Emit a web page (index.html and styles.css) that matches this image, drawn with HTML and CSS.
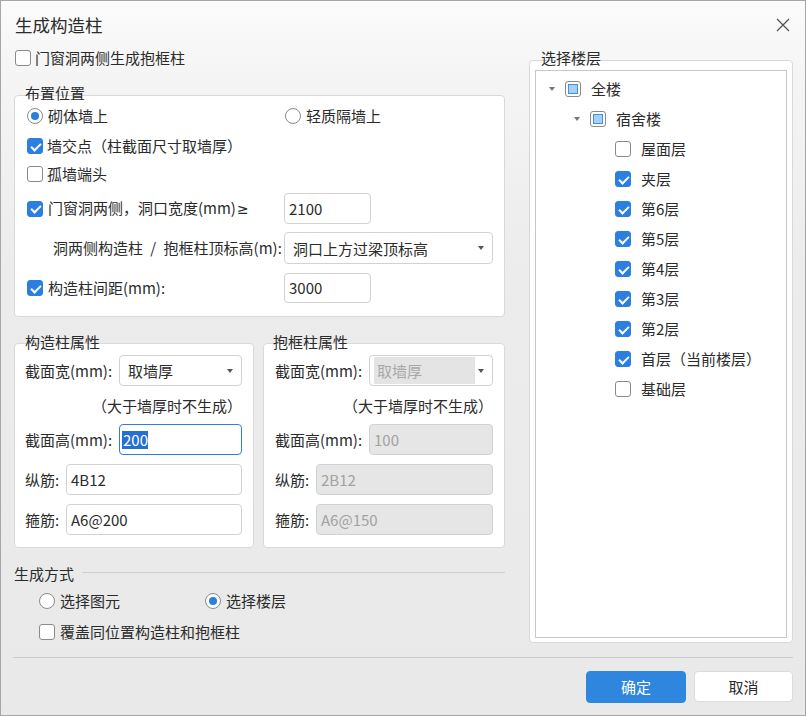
FILE: index.html
```html
<!DOCTYPE html>
<html lang="zh-CN">
<head>
<meta charset="utf-8">
<title>生成构造柱</title>
<link rel="stylesheet" href="styles.css">
</head>
<body>
<div class="window">
  <div class="titlebar">
    <span class="title">生成构造柱</span>
    <svg class="close" width="14" height="14" viewBox="0 0 14 14"><path d="M1 1L13 13M13 1L1 13" stroke="#555" stroke-width="1.3" fill="none"/></svg>
  </div>
  <div class="main">
    <div class="left">
      <div class="row top-check"><span class="cb"></span><span>门窗洞两侧生成抱框柱</span></div>

      <div class="group place">
        <div class="legend">布置位置</div>
        <div class="box place-box">
          <div class="prow r1">
            <div class="c1"><span class="rb on"></span><span>砌体墙上</span></div>
            <div class="c2"><span class="rb"></span><span>轻质隔墙上</span></div>
          </div>
          <div class="prow r2"><div class="c1"><span class="cb on"></span><span>墙交点（柱截面尺寸取墙厚）</span></div></div>
          <div class="prow r3"><div class="c1"><span class="cb"></span><span>孤墙端头</span></div></div>
          <div class="prow r4">
            <div class="c1"><span class="cb on"></span><span>门窗洞两侧，洞口宽度(mm)<span class="ge">≥</span></span></div>
            <div class="field short">2100</div>
          </div>
          <div class="prow r5">
            <div class="c1 indent">洞两侧构造柱 / 抱框柱顶标高(m):</div>
            <div class="field select wide"><span>洞口上方过梁顶标高</span><span class="caret"></span></div>
          </div>
          <div class="prow r6">
            <div class="c1"><span class="cb on"></span><span>构造柱间距(mm):</span></div>
            <div class="field short">3000</div>
          </div>
        </div>
      </div>

      <div class="props">
        <div class="group prop col">
          <div class="legend">构造柱属性</div>
          <div class="box prop-box">
            <div class="frow f1"><span>截面宽(mm):</span><div class="field select mid"><span>取墙厚</span><span class="caret"></span></div></div>
            <div class="note">（大于墙厚时不生成）</div>
            <div class="frow f2"><span>截面高(mm):</span><div class="field mid focus"><span class="sel">200</span></div></div>
            <div class="frow f3"><span>纵筋:</span><div class="field long">4B12</div></div>
            <div class="frow f3"><span>箍筋:</span><div class="field long">A6@200</div></div>
          </div>
        </div>
        <div class="group prop frame">
          <div class="legend">抱框柱属性</div>
          <div class="box prop-box">
            <div class="frow f1"><span>截面宽(mm):</span><div class="field select mid dis-select"><span class="dis-inner">取墙厚</span><span class="caret"></span></div></div>
            <div class="note">（大于墙厚时不生成）</div>
            <div class="frow f2"><span>截面高(mm):</span><div class="field mid disabled">100</div></div>
            <div class="frow f3"><span>纵筋:</span><div class="field long disabled">2B12</div></div>
            <div class="frow f3"><span>箍筋:</span><div class="field long disabled">A6@150</div></div>
          </div>
        </div>
      </div>

      <div class="mode">
        <div class="mode-head"><span>生成方式</span><span class="rule"></span></div>
        <div class="mode-radios">
          <div class="m1"><span class="rb"></span><span>选择图元</span></div>
          <div class="m2"><span class="rb on"></span><span>选择楼层</span></div>
        </div>
        <div class="mode-check"><span class="cb"></span><span>覆盖同位置构造柱和抱框柱</span></div>
      </div>
    </div>

    <div class="right">
      <div class="legend">选择楼层</div>
      <div class="box floor-box">
        <div class="tree">
          <div class="node l0"><span class="arrow"></span><span class="cb part"></span><span>全楼</span></div>
          <div class="node l1"><span class="arrow"></span><span class="cb part"></span><span>宿舍楼</span></div>
          <div class="node l2"><span class="arrow none"></span><span class="cb"></span><span>屋面层</span></div>
          <div class="node l2"><span class="arrow none"></span><span class="cb on"></span><span>夹层</span></div>
          <div class="node l2"><span class="arrow none"></span><span class="cb on"></span><span>第6层</span></div>
          <div class="node l2"><span class="arrow none"></span><span class="cb on"></span><span>第5层</span></div>
          <div class="node l2"><span class="arrow none"></span><span class="cb on"></span><span>第4层</span></div>
          <div class="node l2"><span class="arrow none"></span><span class="cb on"></span><span>第3层</span></div>
          <div class="node l2"><span class="arrow none"></span><span class="cb on"></span><span>第2层</span></div>
          <div class="node l2"><span class="arrow none"></span><span class="cb on"></span><span>首层（当前楼层）</span></div>
          <div class="node l2"><span class="arrow none"></span><span class="cb"></span><span>基础层</span></div>
        </div>
      </div>
    </div>
  </div>
  <div class="footer">
    <div class="sep"></div>
    <div class="buttons">
      <div class="btn primary">确定</div>
      <div class="btn">取消</div>
    </div>
  </div>
</div>
</body>
</html>
```

FILE: styles.css
```css
html, body {
  margin: 0;
  padding: 0;
}
body {
  font-family: "Noto Sans CJK SC", "Microsoft YaHei", sans-serif;
  font-size: 15px;
  color: #2b2b2b;
  line-height: 20px;
}
.window {
  width: 806px;
  height: 716px;
  box-sizing: border-box;
  border: 1px solid #a6a6a6;
  background: linear-gradient(180deg, #fbfbfb 0px, #f5f5f5 70px, #ebeceb 260px, #e8e9e8 716px);
  display: flex;
  flex-direction: column;
}
.titlebar {
  height: 47px;
  display: flex;
  align-items: center;
  justify-content: space-between;
  padding: 0 15px 0 14px;
}
.title {
  font-size: 17.5px;
  color: #2b2b2b;
}
.close {
  display: block;
}
.main {
  display: flex;
  gap: 24px;
  height: 609px;
  padding: 0 12px 0 13px;
}
.left {
  width: 491px;
  display: flex;
  flex-direction: column;
}
.right {
  width: 264px;
  display: flex;
  flex-direction: column;
}

/* controls */
.cb {
  position: relative;
  width: 16px;
  height: 16px;
  box-sizing: border-box;
  border: 1px solid #8a8a8a;
  border-radius: 3px;
  background: #fff;
  flex: none;
}
.cb.on {
  background: #2b7fe0;
  border-color: #2b7fe0;
}
.cb.on::after {
  content: "";
  position: absolute;
  left: 3px;
  top: 3.5px;
  width: 8px;
  height: 4px;
  border-left: 2px solid #fff;
  border-bottom: 2px solid #fff;
  transform: rotate(-45deg);
}
.cb.part::after {
  content: "";
  position: absolute;
  left: 2px;
  top: 2px;
  width: 10px;
  height: 10px;
  box-sizing: border-box;
  background: #a6d0fa;
  border: 1px solid #3f8fe6;
}
.rb {
  position: relative;
  width: 16px;
  height: 16px;
  box-sizing: border-box;
  border: 1px solid #8a8a8a;
  border-radius: 50%;
  background: #fff;
  flex: none;
}
.rb.on::after {
  content: "";
  position: absolute;
  left: 3px;
  top: 3px;
  width: 8px;
  height: 8px;
  border-radius: 50%;
  background: #2b7fe0;
}
.ge {
  font-family: "DejaVu Sans", "Liberation Sans", sans-serif;
  font-size: 14px;
  padding-left: 1px;
}
.field {
  box-sizing: border-box;
  height: 31px;
  line-height: 29px;
  border: 1px solid #d2d2d2;
  border-radius: 4px;
  background: #fff;
  padding-left: 4px;
  color: #2b2b2b;
  flex: none;
}
.field.select {
  display: flex;
  align-items: center;
  justify-content: space-between;
  padding: 0 8px 0 8px;
}
.caret {
  width: 0;
  height: 0;
  border-left: 3px solid transparent;
  border-right: 3px solid transparent;
  border-top: 4px solid #555;
}
.field.short { width: 87px; }
.field.wide { width: 209px; height: 32px; }
.field.mid { width: 123px; }
.field.long { width: 176px; }
.frame .field.mid { width: 124px; }
.frame .field.long { width: 177px; }
.field.focus {
  border-color: #2f7fdc;
  padding-left: 2px;
}
.sel {
  background: #2470d2;
  color: #fff;
  padding: 0 0 0 1px;
  line-height: 18px;
  display: inline-block;
}
.field.disabled {
  background: #e6e6e6;
  border-color: #cfd3d8;
  color: #a2a2a2;
}
.field.dis-select {
  padding: 0 8px 0 4px;
}
.dis-inner {
  display: block;
  width: 101px;
  height: 27px;
  line-height: 27px;
  background: #e4e4e4;
  color: #a8a8a8;
  padding-left: 3px;
  box-sizing: border-box;
}

/* groups */
.legend {
  position: relative;
  z-index: 1;
  height: 16px;
  line-height: 16px;
  padding-left: 11px;
  color: #2b2b2b;
}
.box {
  background: #fff;
  border: 1px solid #d9d9d9;
  border-radius: 4px;
  box-sizing: border-box;
}
.row {
  display: flex;
  align-items: center;
  gap: 4px;
}
.top-check {
  height: 20px;
  padding-left: 1px;
}
.place .legend { margin-top: 17px; }
.place-box {
  margin-top: -6px;
  padding: 10px 12px 13px 12px;
  display: flex;
  flex-direction: column;
}
.prow {
  display: flex;
  align-items: center;
}
.prow .c1 {
  width: 257px;
  display: flex;
  align-items: center;
  gap: 5px;
  white-space: nowrap;
  flex: none;
}
.prow .c2 {
  display: flex;
  align-items: center;
  gap: 5px;
  padding-left: 1px;
}
.prow .c1.indent {
  display: block;
  padding-left: 26px;
  box-sizing: border-box;
  word-spacing: 4px;
}
.r1 { height: 20px; }
.r2 { height: 20px; margin-top: 10px; }
.r3 { height: 20px; margin-top: 8px; }
.r4 { height: 31px; margin-top: 9px; }
.r5 { height: 32px; margin-top: 8px; }
.r6 { height: 30px; margin-top: 9px; }
.r6 .field { height: 30px; line-height: 28px; }
.r2 .c1, .r3 .c1 { width: auto; gap: 4px; }

.props {
  display: flex;
  gap: 9px;
  margin-top: 17px;
}
.prop.col { width: 240px; }
.prop.frame { width: 242px; }
.prop .legend { padding-left: 11px; }
.prop.frame .legend { padding-left: 10px; }
.prop-box {
  margin-top: -7px;
  height: 205px;
  padding: 11px 11px 0 10px;
  display: flex;
  flex-direction: column;
}
.frame .prop-box { padding-left: 11px; }
.frow {
  display: flex;
  align-items: center;
  justify-content: space-between;
}
.f1 .field { height: 31px; }
.note {
  margin-top: 10px;
  height: 20px;
  text-align: right;
}
.f2 { margin-top: 8px; }
.f3 { margin-top: 9px; }

.mode {
  display: flex;
  flex-direction: column;
}
.mode-head {
  margin-top: 18px;
  height: 16px;
  line-height: 16px;
  display: flex;
  align-items: center;
}
.mode-head .rule {
  flex: 1;
  height: 1px;
  background: #cfcfcf;
  margin-left: 8px;
  margin-top: -3px;
}
.mode-radios {
  display: flex;
  margin-top: 9px;
  height: 20px;
  padding-left: 25px;
  align-items: center;
}
.mode-radios .m1 {
  width: 166px;
  display: flex;
  align-items: center;
  gap: 5px;
}
.mode-radios .m2 {
  display: flex;
  align-items: center;
  gap: 5px;
}
.mode-check {
  display: flex;
  align-items: center;
  gap: 5px;
  margin-top: 11px;
  height: 20px;
  padding-left: 25px;
}

/* right */
.right .legend {
  margin-top: 2px;
  padding-left: 12px;
}
.floor-box {
  margin-top: -6px;
  height: 583px;
  padding: 9px 5px 4px 5px;
}
.tree {
  height: 100%;
  box-sizing: border-box;
  border: 1px solid #c8c8c8;
  padding-top: 3px;
}
.node {
  height: 30px;
  display: flex;
  align-items: center;
}
.arrow {
  width: 0;
  height: 0;
  border-left: 3.5px solid transparent;
  border-right: 3.5px solid transparent;
  border-top: 4px solid #777;
  margin-right: 10px;
  flex: none;
}
.arrow.none { visibility: hidden; }
.node .cb { margin-right: 10px; }
.node.l0 { padding-left: 13px; }
.node.l1 { padding-left: 38px; }
.node.l2 { padding-left: 63px; }

/* footer */
.footer {
  flex: 1;
  display: flex;
  flex-direction: column;
}
.sep {
  height: 1px;
  background: #cdcdcd;
  margin: 0 12px 0 12px;
}
.buttons {
  display: flex;
  justify-content: flex-end;
  gap: 8px;
  padding-right: 12px;
  margin-top: 13px;
}
.btn {
  width: 99px;
  height: 31px;
  box-sizing: border-box;
  border: 1px solid #dcdcdc;
  border-radius: 4px;
  background: #fff;
  text-align: center;
  line-height: 29px;
  color: #2b2b2b;
}
.btn.primary {
  width: 100px;
  height: 32px;
  background: #2e86df;
  border-color: #2e86df;
  color: #fff;
  line-height: 30px;
}
```
